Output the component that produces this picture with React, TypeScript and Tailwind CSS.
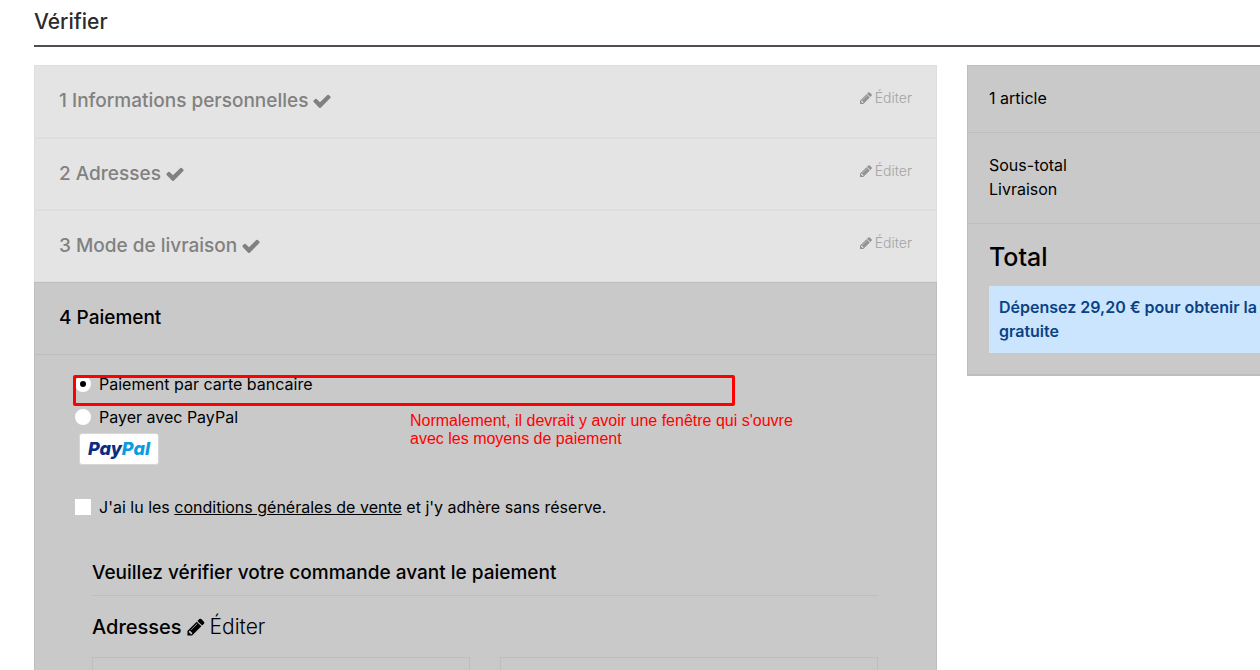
import { useState } from 'react'

const PencilIcon = ({ className }: { className: string }) => (
  <svg viewBox="0 0 1792 1792" fill="currentColor" className={className} aria-hidden="true">
    <path d="M491 1536l91-91-235-235-91 91v107h128v128h107zm523-928q0-22-22-22-10 0-17 7l-542 542q-7 7-7 17 0 22 22 22 10 0 17-7l542-542q7-7 7-17zm-54-192l416 416-832 832h-416v-416zm683 96q0 53-37 90l-166 166-416-416 166-165q36-38 90-38 53 0 91 38l235 234q37 39 37 91z" />
  </svg>
)

const CheckIcon = () => (
  <svg viewBox="0 0 1792 1792" fill="currentColor" className="w-5 h-5" aria-hidden="true">
    <path d="M1671 566q0 40-28 68l-724 724-136 136q-28 28-68 28t-68-28l-136-136-362-362q-28-28-28-68t28-68l136-136q28-28 68-28t68 28l294 295 656-657q28-28 68-28t68 28l136 136q28 28 28 68z" />
  </svg>
)

const DoneStep = ({ number, title }: { number: number; title: string }) => (
  <section className="flex h-[72px] justify-between border-y border-[#dedede] px-6 pt-[21px] first:border-t-0">
    <h2 className="flex items-center gap-1 self-start text-[19px] leading-7 font-medium text-[#818181]">
      {number} {title} <CheckIcon />
    </h2>
    <button className="flex h-[22px] items-center gap-0.5 text-sm font-light text-[#a3a3a3]">
      <PencilIcon className="w-3.5 h-3.5 text-[#929292]" />
      Éditer
    </button>
  </section>
)

const PaymentOption = ({
  id,
  label,
  selected,
  onSelect
}: {
  id: string
  label: string
  selected: boolean
  onSelect: () => void
}) => (
  <div className="flex h-[33px] items-center gap-2">
    <input
      id={id}
      type="radio"
      name="payment"
      checked={selected}
      onChange={onSelect}
      className="h-4 w-4 appearance-none rounded-full border-[5px] border-white bg-white checked:bg-black"
    />
    <label htmlFor={id}>{label}</label>
  </div>
)

export default function App() {
  const [payment, setPayment] = useState('card')
  const [accepted, setAccepted] = useState(false)

  return (
    <div className="min-h-screen overflow-hidden bg-white pl-[34px] font-['Inter',sans-serif] text-base text-black">
      <h1 className="mb-[18px] border-b-2 border-[#544d4d] pt-[5px] pb-[7px] text-[21px] leading-[33px] font-medium text-[#2b2b2b]">
        Vérifier
      </h1>

      <div className="flex items-start gap-[30px]">
        <main className="min-w-0 flex-1">
          <div className="border border-b-0 border-[#dedede] bg-[#e4e4e4]">
            <DoneStep number={1} title="Informations personnelles" />
            <DoneStep number={2} title="Adresses" />
            <DoneStep number={3} title="Mode de livraison" />
          </div>

          <section className="border border-[#bebebe] bg-[#c9c9c9]">
            <h2 className="border-b border-[#bebebe] px-6 pt-[21px] pb-[22px] text-[19px] leading-7 font-medium">
              4 Paiement
            </h2>

            <div className="relative px-10 pt-3">
              <PaymentOption
                id="card"
                label="Paiement par carte bancaire"
                selected={payment === 'card'}
                onSelect={() => setPayment('card')}
              />
              <PaymentOption
                id="paypal"
                label="Payer avec PayPal"
                selected={payment === 'paypal'}
                onSelect={() => setPayment('paypal')}
              />
              <div className="ml-1 flex h-8 w-20 items-center justify-center rounded-[3px] border border-[#d6d6d6] bg-white text-lg font-extrabold text-[#0a2d83] italic">
                <span>
                  Pay<span className="text-[#0a9be0]">Pal</span>
                </span>
              </div>

              {/* Notes on the payment step */}
              <div className="pointer-events-none absolute top-5 left-[38px] h-[31px] w-[662px] rounded-xs border-3 border-[#ff0000]"></div>
              <p className="pointer-events-none absolute top-[57px] left-[375px] font-['Liberation_Sans',sans-serif] leading-[18px] text-[#ff0000]">
                Normalement, il devrait y avoir une fenêtre qui s'ouvre
                <br />
                avec les moyens de paiement
              </p>

              <div className="mt-[30px] flex items-center gap-2">
                <input
                  id="terms"
                  type="checkbox"
                  checked={accepted}
                  onChange={() => setAccepted(!accepted)}
                  className="h-4 w-4 appearance-none bg-white checked:bg-black"
                />
                <label htmlFor="terms">
                  J'ai lu les <a href="#conditions" className="underline">conditions générales de vente</a> et j'y adhère sans réserve.
                </label>
              </div>
            </div>

            <div className="pt-10 pr-[58px] pl-[57px]">
              <h3 className="border-b border-[#bebebe] pb-2 text-[19px] leading-7 font-medium">
                Veuillez vérifier votre commande avant le paiement
              </h3>
              <div className="mt-[15px] flex items-center gap-1 leading-8">
                <h4 className="text-xl leading-8 font-medium">Adresses</h4>
                <button className="flex items-center gap-1 text-[21px] leading-8 font-light">
                  <PencilIcon className="w-5 h-5" />
                  Éditer
                </button>
              </div>
              <div className="mt-[14px] grid grid-cols-2 gap-[30px]">
                <div className="h-40 border border-[#bebebe]"></div>
                <div className="h-40 border border-[#bebebe]"></div>
              </div>
            </div>
          </section>
        </main>

        <aside className="-mr-[130px] w-[423px] shrink-0 border border-b-2 border-[#bebebe] bg-[#c9c9c9]">
          <p className="border-b border-[#bebebe] px-[21px] pt-5 pb-[22px] leading-6">1 article</p>
          <div className="border-b border-[#bebebe] px-[21px] pt-5 pb-[22px] leading-6">
            <p>Sous-total</p>
            <p>Livraison</p>
          </div>
          <div className="px-[21px] pt-[15px] pb-[21px]">
            <p className="text-[25px] leading-9 font-medium">Total</p>
            <p className="mt-[11px] bg-[#cce5ff] px-2.5 pt-[9px] pb-2.5 leading-6 font-semibold text-[#0a4284]">
              Dépensez 29,20 € pour obtenir la
              <br />
              gratuite
            </p>
          </div>
        </aside>
      </div>
    </div>
  )
}
